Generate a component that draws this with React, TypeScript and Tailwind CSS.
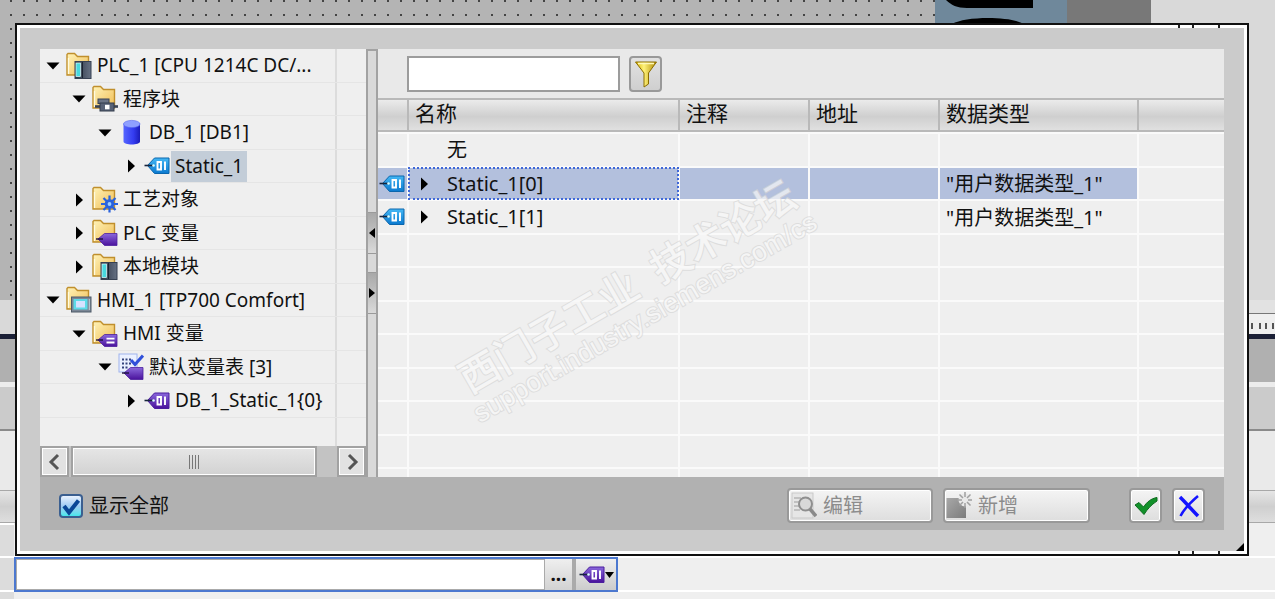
import { useState } from 'react'
import type { ReactNode } from 'react'

type IconName = 'plc' | 'blocks' | 'db' | 'tag' | 'tech' | 'plcTags' | 'hmi' | 'hmiTags' | 'tagTable' | 'tagPurple'

interface TreeItem {
  label: string
  icon: IconName
  level: number
  open: boolean
}

interface TagRow {
  name: string
  type: string
  expandable: boolean
  selected?: boolean
}

const indent = ['pl-0', 'pl-[26px]', 'pl-[52px]', 'pl-[78px]']

const tree: TreeItem[] = [
  { label: 'PLC_1 [CPU 1214C DC/...', icon: 'plc', level: 0, open: true },
  { label: '程序块', icon: 'blocks', level: 1, open: true },
  { label: 'DB_1 [DB1]', icon: 'db', level: 2, open: true },
  { label: 'Static_1', icon: 'tag', level: 3, open: false },
  { label: '工艺对象', icon: 'tech', level: 1, open: false },
  { label: 'PLC 变量', icon: 'plcTags', level: 1, open: false },
  { label: '本地模块', icon: 'plc', level: 1, open: false },
  { label: 'HMI_1 [TP700 Comfort]', icon: 'hmi', level: 0, open: true },
  { label: 'HMI 变量', icon: 'hmiTags', level: 1, open: true },
  { label: '默认变量表 [3]', icon: 'tagTable', level: 2, open: true },
  { label: 'DB_1_Static_1{0}', icon: 'tagPurple', level: 3, open: false },
]

const rows: (TagRow | null)[] = [
  { name: '无', type: '', expandable: false },
  { name: 'Static_1[0]', type: '"用户数据类型_1"', expandable: true, selected: true },
  { name: 'Static_1[1]', type: '"用户数据类型_1"', expandable: true },
  null, null, null, null, null, null, null,
]

const headers = ['', '名称', '注释', '地址', '数据类型', '']

function Defs() {
  return (
    <svg width="0" height="0" className="absolute" aria-hidden="true">
      <defs>
        <linearGradient id="folder" x1="0" y1="0" x2="1" y2="1">
          <stop offset="0" stopColor="#fff3b8" />
          <stop offset="1" stopColor="#f0bd55" />
        </linearGradient>
        <linearGradient id="blueTag" x1="0" y1="0" x2="0" y2="1">
          <stop offset="0" stopColor="#45b8f5" />
          <stop offset="1" stopColor="#0b79cf" />
        </linearGradient>
        <linearGradient id="purpleTag" x1="0" y1="0" x2="0" y2="1">
          <stop offset="0" stopColor="#8a68dc" />
          <stop offset="1" stopColor="#4a129c" />
        </linearGradient>
        <linearGradient id="cyl" x1="0" y1="0" x2="1" y2="0">
          <stop offset="0" stopColor="#5566ff" />
          <stop offset="0.6" stopColor="#343cf0" />
          <stop offset="1" stopColor="#1a1cb8" />
        </linearGradient>
        <linearGradient id="steel" x1="0" y1="0" x2="1" y2="0">
          <stop offset="0" stopColor="#2b3444" />
          <stop offset="1" stopColor="#667183" />
        </linearGradient>
        <linearGradient id="gold" x1="0" y1="0" x2="1" y2="0">
          <stop offset="0" stopColor="#d9b300" />
          <stop offset="0.4" stopColor="#fff27a" />
          <stop offset="1" stopColor="#b08a00" />
        </linearGradient>
        <linearGradient id="greyBlock" x1="0" y1="0" x2="1" y2="1">
          <stop offset="0" stopColor="#a8a8a8" />
          <stop offset="1" stopColor="#7c7c7c" />
        </linearGradient>
      </defs>
    </svg>
  )
}

function Folder() {
  return (
    <>
      <path d="M1 23V2.500L2 1.500H8.500L11.500 4.500H22.500V23Z" fill="url(#folder)" stroke="#c08f2c" strokeWidth="1.400" />
      <path d="M2.500 22V6" stroke="#fffbe0" strokeWidth="1.300" />
    </>
  )
}

function SmallTag({ lines }: { lines?: boolean }) {
  return (
    <>
      <path d="M6 20L12.500 14.500H25V26.500H12.500Z" fill="url(#purpleTag)" stroke="#4b1f9e" strokeWidth="0.800" />
      <path d="M4 20H11" stroke="#1d1040" strokeWidth="1.400" />
      {lines && <path d="M14.500 18.700H22.500M14.500 22.500H22.500" stroke="#fff" strokeWidth="1.800" />}
    </>
  )
}

function Tag({ purple }: { purple?: boolean }) {
  return (
    <>
      <path d="M3.500 13.500L10.500 6H25V21.500H10.500Z" fill={purple ? 'url(#purpleTag)' : 'url(#blueTag)'} stroke={purple ? '#4b1f9e' : '#0b66ad'} />
      <path d="M0.500 13.500H9" stroke="#16243c" strokeWidth="1.600" />
      <circle cx="9.500" cy="13.500" r="1.300" fill="#dff" />
      <path d="M13.500 10H17V17.500H13.500ZM21 9.500V18" fill="none" stroke="#fff" strokeWidth="1.900" />
    </>
  )
}

function NodeIcon({ name }: { name: IconName }) {
  const art: Record<IconName, ReactNode> = {
    plc: (
      <>
        <Folder />
        <rect x="9" y="9.500" width="16" height="17" fill="url(#steel)" stroke="#374152" />
        <rect x="10" y="11" width="4.500" height="13.500" fill="#48d8de" stroke="#e6ffff" strokeWidth="0.700" />
        <path d="M16.500 10V26" stroke="#1b2330" />
      </>
    ),
    blocks: (
      <>
        <Folder />
        <rect x="6" y="14" width="11" height="4.500" fill="#6b7486" stroke="#3a4354" />
        <path d="M3 21.500H26" stroke="#3a4354" strokeWidth="2.600" />
        <rect x="8" y="18" width="14" height="8" fill="#586276" stroke="#333c4d" />
        <rect x="13" y="19.800" width="4.500" height="4.500" fill="#fff" />
      </>
    ),
    db: (
      <>
        <path d="M5.500 4.500V22.500C5.500 26.500 22 26.500 22 22.500V4.500Z" fill="url(#cyl)" />
        <ellipse cx="13.750" cy="5" rx="8.250" ry="3.600" fill="#8fa0ff" stroke="#5868ee" strokeWidth="0.600" />
      </>
    ),
    tag: <Tag />,
    tech: (
      <>
        <Folder />
        <path d="M17.500 9.500V26.500M9 18H26M11.500 12L23.500 24M23.500 12L11.500 24" stroke="#2a63dd" strokeWidth="2.200" />
        <circle cx="17.500" cy="18" r="4.800" fill="#2a63dd" />
        <circle cx="17.500" cy="18" r="1.900" fill="#9fd0ff" />
      </>
    ),
    plcTags: <><Folder /><SmallTag /></>,
    hmi: (
      <>
        <Folder />
        <rect x="5.500" y="11" width="19.500" height="15" fill="#7b8796" stroke="#4e5a69" />
        <rect x="7.500" y="13" width="14" height="10.500" fill="#5ddbe8" />
        <rect x="10" y="15" width="9" height="6.500" fill="#d6e2ff" />
        <path d="M23.300 13V24" stroke="#c5cdd8" />
      </>
    ),
    hmiTags: <><Folder /><SmallTag lines /></>,
    tagTable: (
      <>
        <rect x="1" y="1" width="18" height="18" fill="#eaf0ff" stroke="#9fb4ee" />
        <path d="M4 6.500H14M4 10.500H14M4 14.500H10" stroke="#33427c" strokeWidth="2" strokeDasharray="2 1.500" />
        <SmallTag />
        <path d="M13 7L17 11.500L25 2.500" fill="none" stroke="#2f50da" strokeWidth="3" />
      </>
    ),
    tagPurple: <Tag purple />,
  }
  return (
    <svg width="26" height="28" viewBox="0 0 26 28" className="shrink-0" aria-hidden="true">
      {art[name]}
    </svg>
  )
}

function Arrow({ open }: { open?: boolean }) {
  return (
    <svg width="14" height="14" viewBox="0 0 14 14" aria-hidden="true">
      <path d={open ? 'M0.500 3.500H13.500L7 10.500Z' : 'M4 0.500V13.500L11 7Z'} fill="#000" />
    </svg>
  )
}

function ScrollButton({ label, path }: { label: string; path: string }) {
  return (
    <button
      type="button"
      aria-label={label}
      className="flex w-[29px] items-center justify-center border-2 border-[#a2a2a2] bg-[#e2e2e2] inset-ring-1 inset-ring-white"
    >
      <svg width="18" height="18" viewBox="0 0 18 18"><path d={path} fill="none" stroke="#555" strokeWidth="3" /></svg>
    </button>
  )
}

function TreePanel({ selected, onSelect }: { selected: string; onSelect: (label: string) => void }) {
  return (
    <div className="flex w-[326px] shrink-0 flex-col bg-[#efefef]">
      <ul role="tree" aria-label="PLC_1">
        {tree.map((item) => (
          <li
            key={item.label}
            role="treeitem"
            aria-expanded={item.open}
            onClick={() => onSelect(item.label)}
            className="flex border-b border-[#e5e5e5] odd:h-[34px] even:h-[33px]"
          >
            <div className={`flex min-w-0 flex-1 items-center whitespace-nowrap ${indent[item.level]}`}>
              <button type="button" aria-label={item.label} className="flex w-[26px] shrink-0 items-center justify-center">
                <Arrow open={item.open} />
              </button>
              <NodeIcon name={item.icon} />
              <span className={`ml-px px-1 leading-[31px] ${selected === item.label ? 'bg-[#c3cdd8]' : ''}`}>{item.label}</span>
            </div>
            <div className="w-[31px] shrink-0 border-l-2 border-[#dcdcdc]" />
          </li>
        ))}
      </ul>
      <div className="flex flex-1 justify-end">
        <div className="w-[31px] border-l-2 border-[#dcdcdc]" />
      </div>

      {/* Horizontal scrollbar */}
      <div className="flex h-[31px] bg-[#c3c3c3]">
        <ScrollButton label="<" path="M12 2L5 9L12 16" />
        <div className="ml-[2px] flex w-[246px] items-center justify-center gap-[2px] border-2 border-[#a2a2a2] bg-linear-to-b from-[#e6e6e6] to-[#d2d2d2] inset-ring-1 inset-ring-white">
          {[0, 1, 2, 3].map((n) => <span key={n} className="h-[14px] w-px bg-[#777]" />)}
        </div>
        <div className="flex-1" />
        <ScrollButton label=">" path="M6 2L13 9L6 16" />
      </div>
    </div>
  )
}

function Splitter() {
  const grip = 'flex h-[42px] w-full items-center justify-center border-y border-[#9a9a9a] bg-linear-to-b from-[#a8a8a8] to-[#dadada]'
  return (
    <div className="flex w-[12px] shrink-0 flex-col border-2 border-b-0 border-[#a2a2a2] bg-[#d9d9d9] pt-[161px]">
      <button type="button" aria-label="◂" className={grip}>
        <svg width="6" height="10" viewBox="0 0 6 10"><path d="M6 0V10L0 5Z" /></svg>
      </button>
      <button type="button" aria-label="▸" className={`mt-[18px] ${grip}`}>
        <svg width="6" height="10" viewBox="0 0 6 10"><path d="M0 0V10L6 5Z" /></svg>
      </button>
    </div>
  )
}

function TagTable() {
  const cell = 'border-r-2 border-t-2 border-[#fafafa] p-0'
  return (
    <table className="w-full table-fixed border-separate border-spacing-0 text-[20px]">
      <colgroup>
        <col className="w-[31px]" />
        <col className="w-[271px]" />
        <col className="w-[130px]" />
        <col className="w-[130px]" />
        <col className="w-[199px]" />
        <col />
      </colgroup>
      <thead>
        <tr className="h-[34px]">
          {headers.map((header, i) => (
            <th
              key={i}
              className="border-y-2 border-r-2 border-[#b9b9b9] bg-linear-to-b from-[#ebebeb] via-[#cfcfcf] via-55% to-[#e0e0e0] px-[6px] pt-0 pb-[3px] text-left text-[21px] leading-[27px] font-normal last:border-r-0"
            >
              {header}
            </th>
          ))}
        </tr>
      </thead>
      <tbody>
        {rows.map((row, i) => {
          const fill = row?.selected ? 'bg-[#b3c0dd]' : ''
          return (
            <tr key={i} className="odd:h-[34px] even:h-[33px]">
              <td className={`${cell} ${fill}`}>
                {row?.expandable && <div className="flex h-[31px] items-center pl-px"><NodeIcon name="tag" /></div>}
              </td>
              <td className={`${cell} ${fill}`}>
                {row && (
                  <div className={`flex h-[31px] items-center ${row.selected ? 'outline-2 -outline-offset-1 outline-dotted outline-[#3f68d8]' : ''}`}>
                    <span className="flex w-[38px] shrink-0 pl-2">{row.expandable && <Arrow />}</span>
                    {row.name}
                  </div>
                )}
              </td>
              <td className={`${cell} ${fill}`} />
              <td className={`${cell} ${fill}`} />
              <td className={`${cell} ${fill} pl-[6px]! leading-[31px] whitespace-nowrap`}>{row?.type}</td>
              <td className="border-t-2 border-[#fafafa] p-0" />
            </tr>
          )
        })}
        {/* Cut-off row at the bottom edge */}
        <tr className="h-[10px]">
          {headers.map((_, i) => <td key={i} className="border-t-2 border-r-2 border-[#fafafa] p-0 last:border-r-0" />)}
        </tr>
      </tbody>
    </table>
  )
}

function Watermark() {
  return (
    <div className="pointer-events-none absolute top-[168px] left-[58px] flex w-[400px] -rotate-30 flex-col items-center whitespace-pre text-[#f8f8f8] opacity-70 [-webkit-text-stroke:2px_#d6d6d6] [paint-order:stroke_fill]">
      <span className="text-[40px] leading-[36px] font-medium">西门子工业{'  '}技术论坛</span>
      <span className="font-['Liberation_Sans',sans-serif] text-[27px] leading-[36px]">support.industry.siemens.com/cs</span>
    </div>
  )
}

const footerButton = 'flex h-[35px] items-center rounded-sm border-2 border-[#999] bg-linear-to-b from-[#f4f4f4] to-[#dedede] inset-ring-1 inset-ring-white'

function Footer() {
  const [showAll, setShowAll] = useState(true)
  return (
    <div className="flex h-[53px] items-center bg-[#b1b1b1] pt-1 pr-[19px] pl-[19px]">
      <label className="flex items-center text-[20px]">
        <span className="relative mr-[6px] size-6">
          <input
            type="checkbox"
            checked={showAll}
            onChange={(e) => setShowAll(e.target.checked)}
            className="block size-6 appearance-none rounded-sm border-2 border-[#3b5f90] bg-linear-to-b from-[#e9f2ff] via-[#9fcbf2] to-[#41e6ec]"
          />
          {showAll && (
            <svg viewBox="0 0 24 24" className="pointer-events-none absolute inset-0">
              <path d="M5 12L10 18.500L19.500 6.500" fill="none" stroke="#0a4797" strokeWidth="4" />
            </svg>
          )}
        </span>
        显示全部
      </label>
      <div className="flex-1" />
      <button type="button" disabled className={`${footerButton} w-[146px] gap-[6px] pl-[2px] text-[20px] text-[#8c8c8c]`}>
        <svg width="26" height="28" viewBox="0 0 26 28">
          <rect x="1" y="1" width="21" height="25" fill="#e6e6e6" stroke="#c9c9c9" />
          <path d="M3 6H10M3 10H8M3 14H8M3 18H9" stroke="#b5b5b5" strokeWidth="1.500" />
          <circle cx="14.500" cy="12" r="6.500" fill="#d9d9d9" stroke="#8f8f8f" strokeWidth="2" />
          <path d="M19 17L25 24" stroke="#8a8a8a" strokeWidth="3.500" />
        </svg>
        编辑
      </button>
      <button type="button" disabled className={`${footerButton} ml-[10px] w-[147px] gap-[6px] pl-px text-[20px] text-[#8c8c8c]`}>
        <svg width="26" height="28" viewBox="0 0 26 28">
          <path d="M0.500 6H14L20 12V26H0.500Z" fill="url(#greyBlock)" />
          <circle cx="19" cy="8" r="6.500" fill="#e9e9e9" />
          <path d="M19 0V5M19 11V16M11 8H16M22 8H26M13.500 2.500L17 6M24.500 2.500L21 6M13.500 13.500L17 10M24.500 13.500L21 10" stroke="#a0a0a0" strokeWidth="1.500" />
        </svg>
        新增
      </button>
      <button type="button" aria-label="OK" className={`${footerButton} ml-[39px] w-[33px] justify-center`}>
        <svg width="24" height="24" viewBox="0 0 24 24" className="shrink-0">
          <path d="M1 11L5 8.500L9.500 13C13 8 17 4.500 23 3.500V7C17 11 13.500 15 10 20.500Z" fill="#12912a" stroke="#0c6a1d" />
        </svg>
      </button>
      <button type="button" aria-label="Cancel" className={`${footerButton} ml-[10px] w-[33px] justify-center`}>
        <svg width="24" height="24" viewBox="0 0 24 24" className="shrink-0">
          <path d="M3 3C9 9 15 16 21 22" fill="none" stroke="#1414ff" strokeWidth="3.500" />
          <path d="M21 2C14 8 7 15 3.500 22" fill="none" stroke="#1414ff" strokeWidth="2.500" />
        </svg>
      </button>
    </div>
  )
}

function Backdrop() {
  return (
    <div className="absolute inset-0 flex flex-col overflow-hidden" aria-hidden="true">
      <div className="flex h-[300px] shrink-0">
        <div className="flex-1 bg-[#b4b4b4] bg-[radial-gradient(circle_at_11px_1px,#444_1px,transparent_1px)] bg-size-[13px_14px]" />
        <div className="w-[132px] bg-[#6f889b]">
          <svg width="132" height="24" viewBox="0 0 132 24">
            <path d="M11 0C16 5 22 8 32 8H98V0Z" />
            <path d="M17 24C24 20 38 18 53 18S82 20 89 24Z" />
          </svg>
        </div>
        <div className="w-[84px] bg-[#787878]" />
        <div className="w-[124px] bg-[#d9d9d9]" />
      </div>
      <div className="flex h-[34px] shrink-0 bg-[#d9d9d9]">
        <div className="flex-1" />
        <div className="w-[124px] bg-[#e2e2e2] pt-[13px]">
          <svg width="124" height="21" viewBox="0 0 124 21">
            <rect width="124" height="21" fill="#efefef" />
            <path d="M0 0.500H124" stroke="#777" />
            <path d="M101 10V16M109 10V16M115 10V16M122 10V16" stroke="#555" strokeWidth="2" />
          </svg>
        </div>
      </div>
      <div className="h-[5px] shrink-0 bg-[#1b2036]" />
      <div className="h-[43px] shrink-0 bg-[#b0b0b0]" />
      <div className="h-[5px] shrink-0 bg-[#ececec]" />
      <div className="h-[44px] shrink-0 border-b-2 border-[#8a8a8a] bg-[#cbcbcb]" />
      <div className="h-[59px] shrink-0 bg-[#eaeaea]" />
      <div className="h-[33px] shrink-0 border-y border-[#a8a8a8] bg-linear-to-b from-[#e6e6e6] via-[#cfcfcf] to-[#dedede]" />
      <div className="flex flex-1">
        <div className="w-[14px] border-t-2 border-white bg-[#dcdcdc]">
          <div className="h-[33px] border-b-2 border-white" />
          <div className="h-[34px] border-b-2 border-white" />
        </div>
        <div className="flex-1 bg-[#efefef]">
          <div className="h-[35px] border-b-2 border-white" />
          <div className="h-[34px] border-b-2 border-white" />
        </div>
      </div>
    </div>
  )
}

function EdgeTicks() {
  return (
    <svg width="42" height="3" viewBox="0 0 42 3">
      <path d="M1 0V3M15 0V3M41 0V3" stroke="#222" strokeWidth="2" />
    </svg>
  )
}

export default function App() {
  const [selected, setSelected] = useState('Static_1')

  return (
    <main className="relative min-h-screen overflow-hidden bg-[#efefef] pt-[23px] font-['Noto_Sans','Noto_Sans_CJK_SC',sans-serif] text-[19px] text-[#111]">
      <Defs />
      <Backdrop />

      <section role="dialog" className="relative mr-[26px] ml-[15px] border-2 border-[#111]">
        <div className="border-3 border-white bg-[#cbcbcb] px-5 py-[21px]">
          <div className="flex h-[428px]">
            <TreePanel selected={selected} onSelect={setSelected} />
            <Splitter />
            <div className="min-w-0 flex-1 bg-[#efefef]">
              <div className="flex h-[49px] items-center gap-[9px] bg-[#e9e9e9] pl-[29px]">
                <input type="text" aria-label="名称" className="h-[36px] w-[213px] border-2 border-[#9c9c9c] bg-white px-2 outline-none" />
                <button type="button" aria-label="Filter" className="flex h-[36px] w-[33px] items-center justify-center rounded-sm border-2 border-[#999] bg-linear-to-b from-[#e2e2e2] to-[#cfcfcf]">
                  <svg width="24" height="28" viewBox="0 0 24 28" className="shrink-0">
                    <path d="M1.500 2H22.500L14.500 13V24L10 27V13Z" fill="url(#gold)" stroke="#8a6c00" />
                    <path d="M4 3.500H20" stroke="#fff9b8" strokeWidth="1.500" />
                  </svg>
                </button>
              </div>
              <div className="relative">
                <TagTable />
                <Watermark />
              </div>
            </div>
          </div>
          <Footer />
        </div>
        {/* Frame marks and resize corner */}
        <div className="absolute top-0 right-[27px] flex"><EdgeTicks /></div>
        <div className="absolute right-[27px] bottom-0 flex"><EdgeTicks /></div>
        <svg width="8" height="8" viewBox="0 0 8 8" className="absolute right-[3px] bottom-[3px]"><path d="M8 0V8H0Z" /></svg>
      </section>

      <div className="relative mt-px ml-[14px] flex h-[35px] w-[604px] border-2 border-[#4c78cf] bg-[#aaa]">
        <input type="text" aria-label="HMI 变量" className="min-w-0 flex-1 border border-[#aaa] bg-white px-2 outline-none" />
        <button type="button" className="w-[27px] bg-linear-to-b from-[#efefef] to-[#d2d2d2] leading-[31px] font-bold">...</button>
        <button type="button" aria-label="Tag" className="ml-1 flex w-[40px] items-center justify-center bg-linear-to-b from-[#efefef] to-[#cccccc]">
          <NodeIcon name="tagPurple" />
          <svg width="9" height="6" viewBox="0 0 9 6"><path d="M0 0H9L4.500 6Z" /></svg>
        </button>
      </div>
    </main>
  )
}
